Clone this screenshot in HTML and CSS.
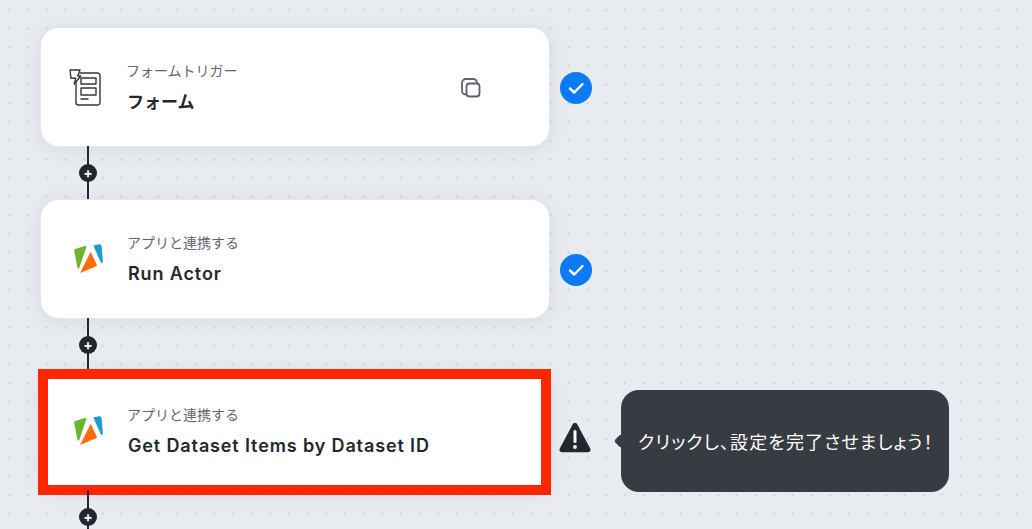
FILE: index.html
```html
<!DOCTYPE html>
<html lang="ja">
<head>
    <meta charset="UTF-8">
    <title>フロー</title>
    <link rel="stylesheet" href="styles.css">
</head>
<body>
    <svg width="0" height="0" class="defs">
        <symbol id="apify" viewBox="-2 -1 34 34">
            <path d="M3.200 6.100 13 3c1-.3 1.600.3 1.300 1.200L7.300 24.800c-.4 1-1.600 1-1.900-.1L2.200 7.500c-.2-.6.300-1.200 1-1.400z" fill="#6cb52d"/>
            <path d="M21.300 2.400 27 1.200c1.400-.3 2.400.6 2.600 1.800l1.200 14.600c.1 1.500-.6 2.400-1.600 2.700L21.300 2.400z" fill="#1d9ccf"/>
            <path d="M18.700 8.700 24.800 21.800c.3.700 0 1.300-.7 1.500L8 30z" fill="#ff6d0d"/>
        </symbol>
    </svg>

    <div class="flow">
        <div class="row">
            <div class="card">
                <svg class="node-icon node-icon-form" viewBox="0 0 36 40" fill="none" stroke="#33373e" stroke-width="1.400" stroke-linejoin="round" stroke-linecap="round">
                    <path d="M11 5h17.500a2.500 2.500 0 0 1 2.500 2.500v27a2.500 2.500 0 0 1-2.500 2.500H9.500A2.500 2.500 0 0 1 7 34.500V15"/>
                    <path d="M1 2h10L8.700 8h3L5.300 16l1.400-5.700H2z"/>
                    <rect x="12" y="10" width="15" height="6"/>
                    <rect x="12" y="20" width="15" height="7"/>
                    <path d="M12 31h7"/>
                </svg>
                <div class="card-text">
                    <div class="card-sub">フォームトリガー</div>
                    <div class="card-title card-title-ja">フォーム</div>
                </div>
                <svg class="copy-icon" viewBox="0 0 22 22" fill="none" stroke="#5c626b" stroke-width="1.800">
                    <rect x="6.500" y="6.500" width="13" height="13" rx="3"/>
                    <path d="M6.500 17.200A3.500 3.500 0 0 1 2 14V6a4 4 0 0 1 4-4h7.500a3.500 3.500 0 0 1 3.300 4.500"/>
                </svg>
            </div>
            <div class="status status-ok status-first">
                <svg viewBox="0 0 32 32" fill="none" stroke="#fff" stroke-width="2.400" stroke-linecap="round" stroke-linejoin="round"><path d="M10 16.500l4.300 4L22.500 12"/></svg>
            </div>
        </div>

        <div class="connector"><span class="plus">+</span></div>

        <div class="row">
            <div class="card">
                <svg class="node-icon"><use href="#apify"/></svg>
                <div class="card-text">
                    <div class="card-sub">アプリと連携する</div>
                    <div class="card-title">Run Actor</div>
                </div>
            </div>
            <div class="status status-ok status-second">
                <svg viewBox="0 0 32 32" fill="none" stroke="#fff" stroke-width="2.400" stroke-linecap="round" stroke-linejoin="round"><path d="M10 16.500l4.300 4L22.500 12"/></svg>
            </div>
        </div>

        <div class="connector"><span class="plus">+</span></div>

        <div class="row">
            <div class="card">
                <svg class="node-icon"><use href="#apify"/></svg>
                <div class="card-text">
                    <div class="card-sub">アプリと連携する</div>
                    <div class="card-title">Get Dataset Items by Dataset ID</div>
                </div>
                <div class="highlight"></div>
            </div>
            <div class="status status-warn">
                <svg viewBox="0 0 32 32"><path d="M16 1c1 0 1.900.5 2.400 1.400l12.800 24c1 1.900-.2 3.800-2.300 3.800H3.100c-2.100 0-3.300-1.900-2.300-3.800l12.800-24C14.100 1.500 15 1 16 1z" fill="#23272e"/><path d="M16 9.500v10" stroke="#fff" stroke-width="3" stroke-linecap="round"/><circle cx="16" cy="25" r="1.900" fill="#fff"/></svg>
            </div>
            <div class="tip">クリックし、設定を完了させましょう！</div>
        </div>

        <div class="connector"><span class="plus">+</span></div>
    </div>
</body>
</html>
```

FILE: styles.css
```css
html, body {
    height: 100%;
}

body {
    margin: 0;
    overflow: hidden;
    font-family: Inter, "Noto Sans CJK JP", sans-serif;
    background-color: #e8ebf0;
    background-image: radial-gradient(circle, #d3d7de 1px, transparent 1.500px);
    background-size: 18.670px 18.670px;
    background-position: 0 0.700px;
}

.defs {
    position: absolute;
}

.flow {
    display: flex;
    flex-direction: column;
    padding: 28px 0 0 41px;
}

.row {
    display: flex;
    align-items: flex-start;
    height: 118px;
}

.card {
    position: relative;
    display: flex;
    align-items: center;
    box-sizing: border-box;
    width: 508px;
    height: 118px;
    flex-shrink: 0;
    padding: 0 0 0 29px;
    background: #fff;
    border-radius: 18px;
    box-shadow: 0 0 0 1px #e4e7ec, 0 2px 20px rgba(60, 70, 90, 0.1);
}

.node-icon {
    width: 34px;
    height: 34px;
    margin-right: -2px;
    flex-shrink: 0;
}

.node-icon-form {
    width: 36px;
    height: 40px;
    margin: 2px -4px 0 -1px;
}

.card-text {
    margin-left: 25px;
    padding-top: 1px;
}

.card-sub {
    font-size: 14px;
    line-height: 18px;
    color: #5f6570;
}

.card-title {
    margin-top: 10px;
    margin-left: 1px;
    font-size: 18px;
    line-height: 24px;
    font-weight: 600;
    letter-spacing: 0.87px;
    color: #23272e;
}

.card-title-ja {
    font-size: 17px;
    font-weight: 700;
    letter-spacing: 0;
}

.copy-icon {
    width: 22px;
    height: 22px;
    position: absolute;
    left: 419px;
    top: 49px;
}

.highlight {
    position: absolute;
    top: -3px;
    left: -3px;
    right: -2px;
    bottom: -5px;
    border: 10px solid #ff2600;
}

.status {
    width: 32px;
    height: 32px;
    margin-left: 11px;
    flex-shrink: 0;
}

.status svg {
    display: block;
}

.status-ok {
    background: #0a7bf2;
    border-radius: 50%;
}

.status-first {
    margin-top: 44px;
}

.status-second {
    margin-top: 54px;
}

.status-warn {
    margin: 50px 0 0 10px;
}

.tip {
    position: relative;
    display: flex;
    align-items: center;
    box-sizing: border-box;
    width: 328px;
    height: 102px;
    margin: 18px 0 0 30px;
    padding-left: 17px;
    background: #383b42;
    border-radius: 18px;
    color: #fff;
    font-size: 18px;
    letter-spacing: 1.100px;
    font-feature-settings: "palt";
    white-space: nowrap;
}

.tip::before {
    content: "";
    position: absolute;
    left: -5px;
    top: 46px;
    width: 10px;
    height: 10px;
    background: #383b42;
    transform: rotate(45deg);
    border-radius: 2px;
}

.connector {
    position: relative;
    display: flex;
    align-items: center;
    justify-content: center;
    width: 2px;
    height: 54px;
    margin-left: 46px;
    background: #23272e;
}

.plus {
    display: flex;
    align-items: center;
    justify-content: center;
    flex-shrink: 0;
    width: 18px;
    height: 18px;
    border-radius: 50%;
    background: #23272e;
    color: #fff;
    font-size: 14px;
    font-weight: 700;
    line-height: 1;
}
```
